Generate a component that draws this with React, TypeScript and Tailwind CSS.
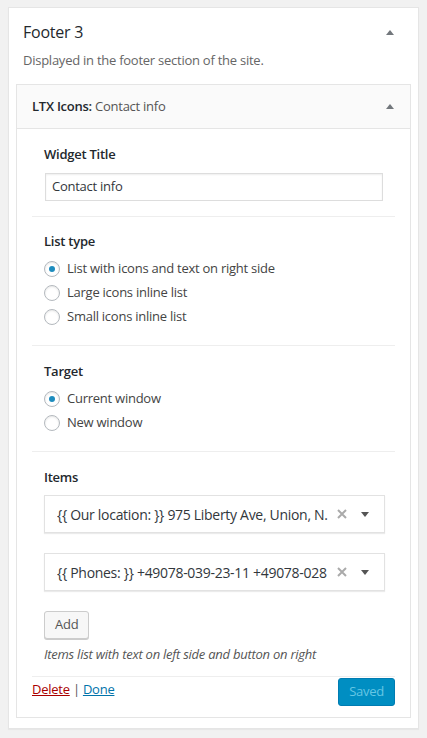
import React from "react";

const font = { fontFamily: '"Open Sans", "Noto Sans", sans-serif' };

const Arrow = () => (
  <span className="inline-block w-0 h-0 border-l-[4px] border-r-[4px] border-b-[5px] border-l-transparent border-r-transparent border-b-[#72777c]" />
);

const Radio = ({ checked, label }: { checked?: boolean; label: string }) => (
  <label className="flex items-center h-[24px] gap-[7px] text-[13px] text-[#444]">
    <span className="w-[16px] h-[16px] rounded-full border border-[#b4b9be] bg-white shadow-[inset_0_1px_2px_rgba(0,0,0,0.1)] flex items-center justify-center">
      {checked && <span className="w-[6px] h-[6px] rounded-full bg-[#1e8cbe]" />}
    </span>
    {label}
  </label>
);

const Item = ({ text }: { text: string }) => (
  <div className="h-[38px] border border-[#e2e2e2] bg-white shadow-[0_1px_1px_rgba(0,0,0,0.08)] flex items-center pl-[12px] pr-[15px] text-[14px] tracking-[-0.3px] text-[#32373c]">
    <span className="flex-1 whitespace-nowrap overflow-hidden">{text}</span>
    <svg width="10" height="10" viewBox="0 0 10 10" className="ml-[6px]">
      <path d="M1 1L9 9M9 1L1 9" stroke="#aaa" strokeWidth="2" />
    </svg>
    <span className="ml-[14px] w-0 h-0 border-l-[4px] border-r-[4px] border-t-[5px] border-l-transparent border-r-transparent border-t-[#555]" />
  </div>
);

export default function App() {
  return (
    <div className="min-h-screen bg-[#f1f1f1] pt-[7px] px-[8px] tracking-[-0.25px]" style={font}>
      <div className="bg-white border border-[#e5e5e5] shadow-[0_1px_1px_rgba(0,0,0,0.04)] px-[7px] pb-[10px]">
        <div className="flex items-center justify-between pt-[14px] pl-[7px] pr-[17px]">
          <h2 className="text-[16px] leading-[20px] text-[#23282d]">Footer 3</h2>
          <Arrow />
        </div>
        <p className="mt-[8px] mb-[14px] text-[13px] text-[#666] pl-[7px] leading-[20px]">
          Displayed in the footer section of the site.
        </p>

        <div className="border border-[#e5e5e5] bg-white">
          <div className="h-[44px] bg-[#fafafa] border-b border-[#e5e5e5] flex items-center justify-between pl-[15px] pr-[16px]">
            <h3 className="text-[13px] font-semibold text-[#23282d]">
              LTX Icons: <span className="font-normal text-[#555]">Contact info</span>
            </h3>
            <Arrow />
          </div>

          <div className="px-[15px]">
            <div className="border-b border-[#eee] px-[12px] pt-[16px] pb-[15px]">
              <div className="text-[13px] font-semibold text-[#23282d] leading-[18px]">Widget Title</div>
              <div className="mt-[10px] h-[28px] ml-[1px] border border-[#ddd] shadow-[inset_0_1px_2px_rgba(0,0,0,0.07)] flex items-center px-[6px] text-[13px] text-[#32373c]">
                Contact info
              </div>
            </div>

            <div className="border-b border-[#eee] px-[12px] pt-[15px] pb-[16px]">
              <div className="text-[13px] font-semibold text-[#23282d] leading-[18px]">List type</div>
              <div className="mt-[7px]">
                <Radio checked label="List with icons and text on right side" />
                <Radio label="Large icons inline list" />
                <Radio label="Small icons inline list" />
              </div>
            </div>

            <div className="border-b border-[#eee] px-[12px] pt-[16px] pb-[16px]">
              <div className="text-[13px] font-semibold text-[#23282d] leading-[18px]">Target</div>
              <div className="mt-[7px]">
                <Radio checked label="Current window" />
                <Radio label="New window" />
              </div>
            </div>

            <div className="border-b border-[#eee] px-[12px] pt-[16px] pb-[13px]">
              <div className="text-[13px] font-semibold text-[#23282d] leading-[18px]">Items</div>
              <div className="mt-[9px] mr-[-2px] flex flex-col gap-[20px]">
                <Item text="{{ Our location: }} 975 Liberty Ave, Union, N." />
                <Item text="{{ Phones: }} +49078-039-23-11 +49078-028" />
              </div>
              <button className="mt-[20px] h-[28px] px-[10px] bg-[#f7f7f7] border border-[#ccc] rounded-[3px] shadow-[0_1px_0_#ccc] text-[13px] text-[#555]">
                Add
              </button>
              <p className="mt-[6px] text-[13px] italic text-[#555] leading-[18px]">
                Items list with text on left side and button on right
              </p>
            </div>

            <div className="flex justify-between items-start pt-[1px] pb-[11px]">
              <div className="text-[13px] leading-[18px] pt-[2px]">
                <a className="text-[#a00] underline">Delete</a>
                <span className="text-[#555]"> | </span>
                <a className="text-[#0073aa] underline">Done</a>
              </div>
              <button className="h-[28px] px-[10px] rounded-[3px] bg-[#008ec2] border border-[#007cb2] text-[13px] text-[#66c6e4]">
                Saved
              </button>
            </div>
          </div>
        </div>
      </div>
    </div>
  );
}
